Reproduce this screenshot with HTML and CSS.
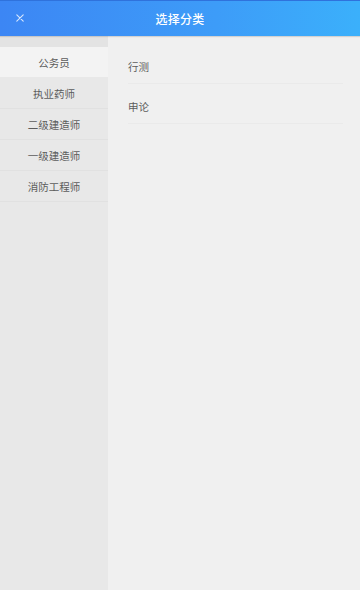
FILE: index.html
```html
<!DOCTYPE html>
<html lang="zh">
<head>
<meta charset="utf-8">
<link rel="stylesheet" href="styles.css">
</head>
<body>
<div class="app">
  <header class="bar">
    <span class="close">
      <svg width="8" height="8" viewBox="0 0 8 8"><path d="M0.8 0.8L7.2 7.2M7.2 0.8L0.8 7.2" stroke="#ffffff" stroke-width="1.1" stroke-linecap="round" fill="none" opacity="0.8"/></svg>
    </span>
    <h1 class="title">选择分类</h1>
  </header>
  <div class="main">
    <nav class="side">
      <div class="side-top"></div>
      <div class="side-item active">公务员</div>
      <div class="side-item">执业药师</div>
      <div class="side-item">二级建造师</div>
      <div class="side-item">一级建造师</div>
      <div class="side-item">消防工程师</div>
    </nav>
    <section class="content">
      <div class="row">行测</div>
      <div class="row">申论</div>
    </section>
  </div>
</div>
</body>
</html>
```
FILE: styles.css
```css
* { box-sizing: border-box; }
html, body { margin: 0; padding: 0; }
body {
  font-family: "Noto Sans CJK SC", "Noto Sans", sans-serif;
  background: #f0f0f0;
}
.app {
  width: 360px;
  height: 590px;
  display: flex;
  flex-direction: column;
  overflow: hidden;
}
.bar {
  height: 36px;
  flex: none;
  display: flex;
  align-items: center;
  justify-content: center;
  position: relative;
  background: linear-gradient(90deg, #3c86f4 0%, #3d9cf8 60%, #3bb0fb 100%);
  border-top: 1px solid #2f72dc;
  box-shadow: 0 1px 1px rgba(0,0,0,0.12);
  z-index: 1;
}
.close {
  position: absolute;
  left: 16px;
  top: 13px;
  width: 8px;
  height: 8px;
  display: flex;
}
.title {
  margin: 0;
  font-size: 12px;
  font-weight: 500;
  color: #ffffff;
  letter-spacing: 0.3px;
  line-height: 1;
}
.main {
  flex: 1;
  display: flex;
}
.side {
  width: 108px;
  flex: none;
  background: #e8e8e8;
  display: flex;
  flex-direction: column;
}
.side-top {
  height: 11px;
  background: #e3e3e3;
}
.side-item {
  height: 31px;
  display: flex;
  align-items: center;
  justify-content: center;
  font-size: 10.5px;
  color: #5c5c5c;
  border-bottom: 1px solid #e1e1e1;
}
.side-item.active {
  background: #f3f3f3;
  border-bottom-color: #e8e8e8;
}
.content {
  flex: 1;
  background: #f0f0f0;
  padding: 8px 17px 0 20px;
}
.row {
  height: 40px;
  padding-top: 16px;
  font-size: 10.5px;
  line-height: 14px;
  color: #5c5c5c;
  border-bottom: 1px solid #eaeaea;
}
```
